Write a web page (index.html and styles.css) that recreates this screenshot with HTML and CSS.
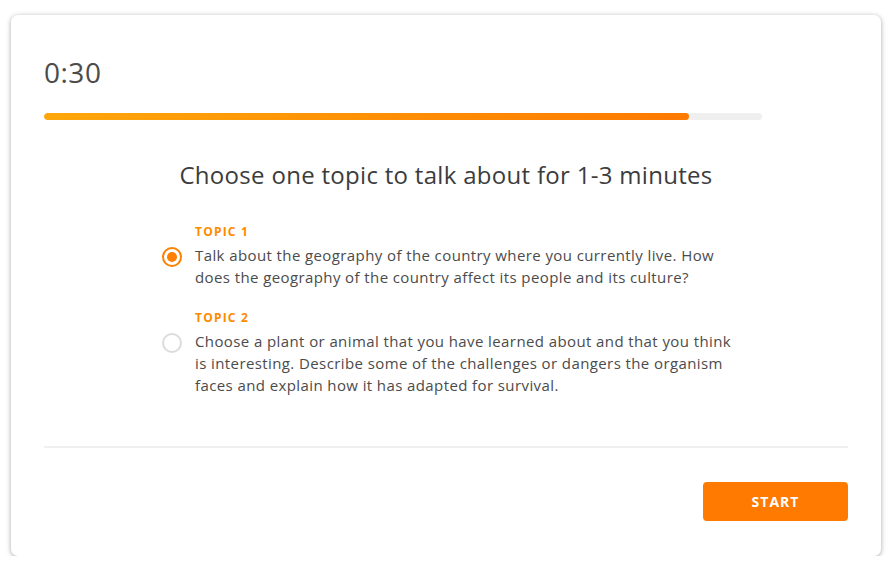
FILE: index.html
```html
<!DOCTYPE html>
<html lang="en">
<head>
    <meta charset="UTF-8">
    <title>Speaking test</title>
    <link rel="stylesheet" href="styles.css">
</head>
<body>
    <div class="card">
        <div class="timer">0:30</div>
        <div class="progress"><div class="fill" style="width: 89.8%"></div></div>

        <h1 class="title">Choose one topic to talk about for 1-3 minutes</h1>

        <div class="topics">
            <label class="topic">
                <span class="radio checked"></span>
                <span class="topic-body">
                    <span class="topic-label">TOPIC 1</span>
                    <span class="topic-text">Talk about the geography of the country where you currently live. How does the geography of the country affect its people and its culture?</span>
                </span>
            </label>
            <label class="topic">
                <span class="radio"></span>
                <span class="topic-body">
                    <span class="topic-label">TOPIC 2</span>
                    <span class="topic-text">Choose a plant or animal that you have learned about and that you think is interesting. Describe some of the challenges or dangers the organism faces and explain how it has adapted for survival.</span>
                </span>
            </label>
        </div>

        <div class="footer">
            <button class="start-btn">START</button>
        </div>
    </div>
</body>
</html>
```

FILE: styles.css
```css
body { margin: 0; background: #fff; font-family: "Open Sans", Lato, sans-serif; color: #4b4b4b; }
.card { box-sizing: border-box; width: 870px; height: 541px; margin: 15px 0 0 11px; background: #fff; border-radius: 7px; box-shadow: 0 1px 5px rgba(0,0,0,0.35); padding: 0 33px; display: flex; flex-direction: column; }
.timer { font-size: 28px; color: #4b4b4b; margin-top: 39px; line-height: 36px; letter-spacing: 0.5px; }
.progress { width: 718px; height: 7px; background: #efefef; border-radius: 4px; margin-top: 23px; overflow: hidden; }
.fill { height: 100%; border-radius: 4px; background: linear-gradient(90deg, #ffa70a, #ff7a00); }
.title { font-weight: 400; font-size: 24px; letter-spacing: 0.3px; text-align: center; color: #3c3c3c; margin: 39px 0 0; line-height: 32px; }
.topics { margin: 33px 0 0 118px; width: 580px; }
.topic { display: flex; gap: 13px; margin-bottom: 22px; }
.radio { box-sizing: border-box; width: 20px; height: 20px; border-radius: 50%; border: 2px solid #dcdcdc; margin-top: 23px; flex: none; position: relative; }
.radio.checked { border-color: #ff7f00; }
.radio.checked::after { content: ""; position: absolute; left: 3px; top: 3px; width: 10px; height: 10px; border-radius: 50%; background: #ff7f00; }
.topic-body { display: flex; flex-direction: column; width: 542px; }
.topic-label { font-size: 12px; font-weight: 700; color: #ff8a00; letter-spacing: 1.2px; line-height: 16px; margin-bottom: 4px; }
.topic-text { font-size: 15px; letter-spacing: 0.4px; line-height: 22px; color: #4b4b4b; }
.footer { margin-top: auto; border-top: 2px solid #f0f0f0; padding: 34px 0 35px; display: flex; justify-content: flex-end; }
.start-btn { width: 145px; height: 39px; background: #ff7a00; color: #fff; border: none; border-radius: 4px; font-family: "Open Sans", sans-serif; font-weight: 700; font-size: 14px; letter-spacing: 1px; cursor: pointer; }
```
